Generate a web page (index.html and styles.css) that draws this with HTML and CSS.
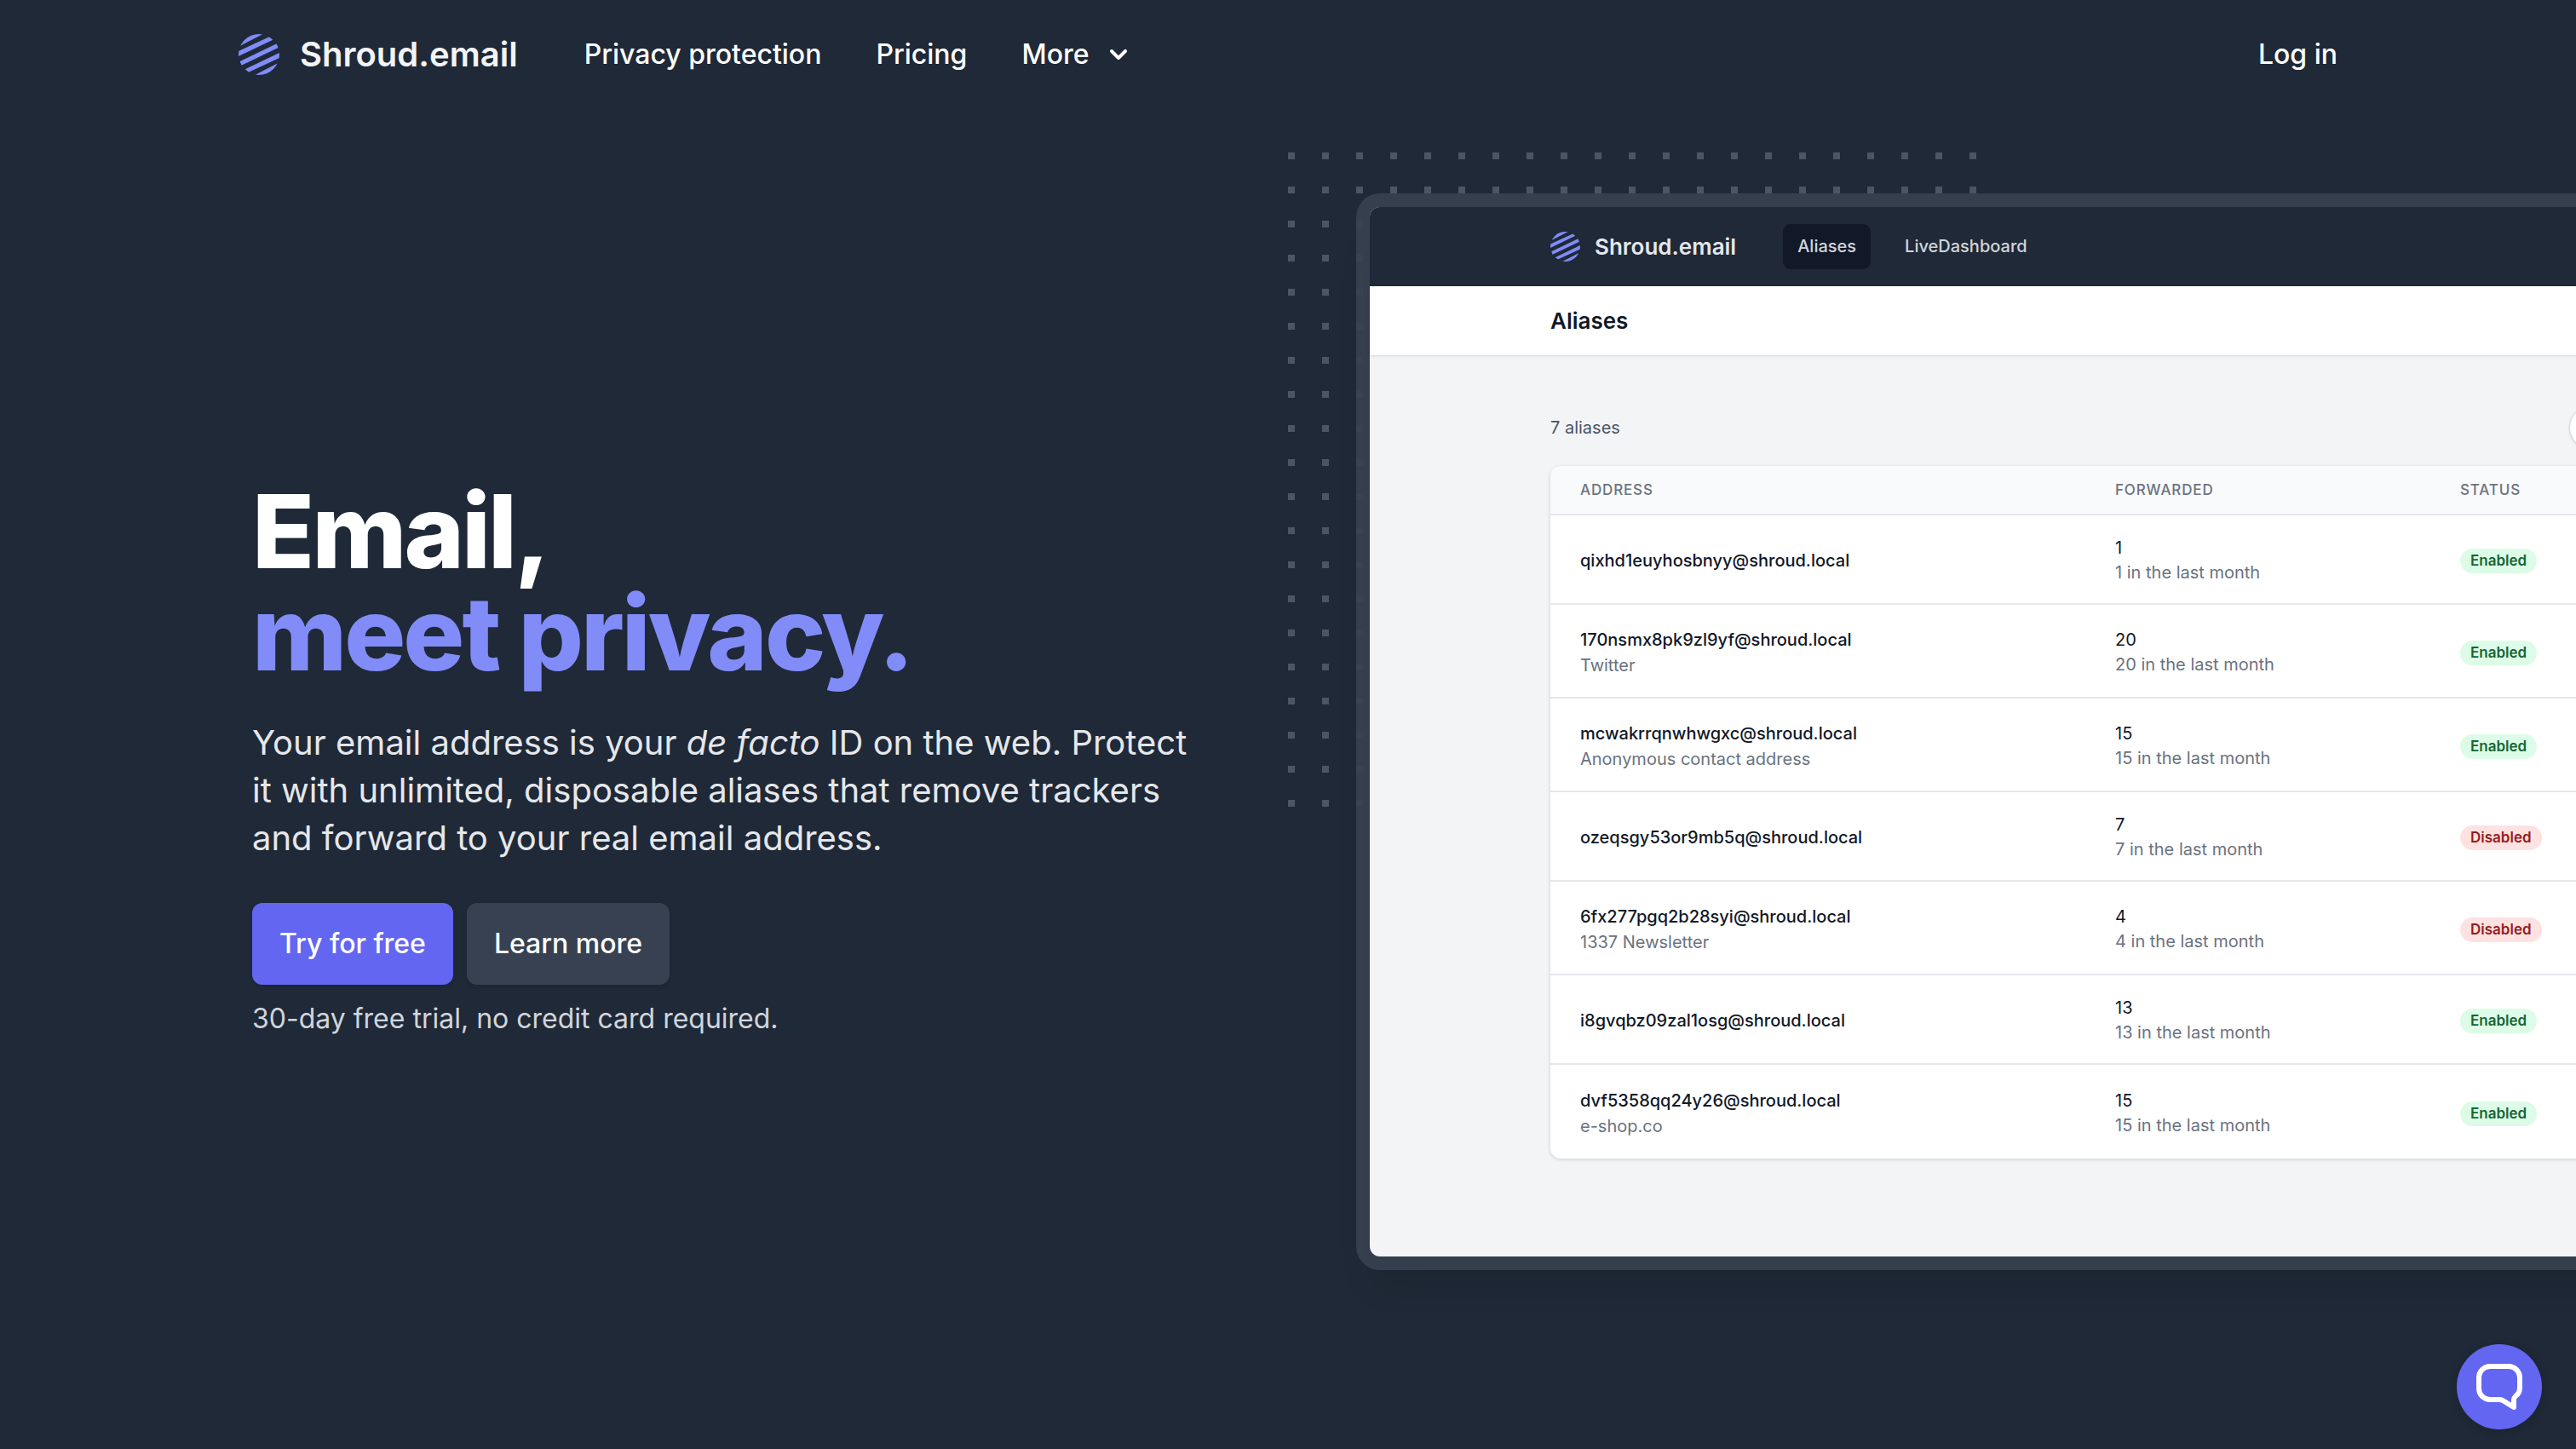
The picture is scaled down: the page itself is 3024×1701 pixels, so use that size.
FILE: index.html
```html
<!DOCTYPE html>
<html lang="en">
<head>
<meta charset="utf-8">
<meta name="viewport" content="width=device-width, initial-scale=1">
<title>Shroud.email</title>
<link rel="stylesheet" href="styles.css">
</head>
<body>
<svg class="defs" aria-hidden="true">
  <symbol id="mark" viewBox="0 0 144 144">
    <clipPath id="disc"><circle cx="72" cy="72" r="72"/></clipPath>
    <g clip-path="url(#disc)" fill="currentColor">
      <path d="M6 41 90 -2H0Z"/>
      <path d="M-2 61 108 10 121 20 -2 79Z"/>
      <path d="M5 96 136 33 140 48 9 111Z"/>
      <path d="M146 83 36 134 23 124 146 65Z"/>
      <path d="M138 103 54 146H144Z"/>
    </g>
  </symbol>
</svg>

<header class="site-header">
  <a class="brand" href="#">
    <svg class="brand-mark" aria-hidden="true"><use href="#mark"/></svg>
    <span>Shroud.email</span>
  </a>
  <nav class="site-nav">
    <a href="#">Privacy protection</a>
    <a href="#">Pricing</a>
    <button type="button" class="more">More
      <svg class="chevron" viewBox="0 0 20 20" fill="currentColor" aria-hidden="true"><path fill-rule="evenodd" clip-rule="evenodd" d="M5.293 7.293a1 1 0 011.414 0L10 10.586l3.293-3.293a1 1 0 111.414 1.414l-4 4a1 1 0 01-1.414 0l-4-4a1 1 0 010-1.414z"/></svg>
    </button>
  </nav>
  <a class="login" href="#">Log in</a>
</header>

<main class="stage">
  <div class="hero">
    <section class="pitch">
      <h1><span class="line">Email,</span> <span class="line accent">meet privacy.</span></h1>
      <p class="lead">Your email address is your <em>de facto</em> ID on the web. Protect it with unlimited, disposable aliases that remove trackers and forward to your real email address.</p>
      <div class="actions">
        <a class="btn btn-primary" href="#">Try for free</a>
        <a class="btn btn-muted" href="#">Learn more</a>
      </div>
      <p class="note">30-day free trial, no credit card required.</p>
    </section>

    <section class="preview">
      <svg class="dots" width="808" height="784" aria-hidden="true">
        <defs><pattern id="dot" width="40" height="40" patternUnits="userSpaceOnUse"><rect width="8" height="8" fill="#4b5563"/></pattern></defs>
        <rect width="808" height="784" fill="url(#dot)"/>
      </svg>
      <div class="app">
        <div class="app-bar">
          <a class="app-brand" href="#">
            <svg class="app-mark" aria-hidden="true"><use href="#mark"/></svg>
            <span>Shroud.email</span>
          </a>
          <a class="tab tab-active" href="#">Aliases</a>
          <a class="tab" href="#">LiveDashboard</a>
        </div>
        <h2 class="app-title">Aliases</h2>
        <div class="app-body">
          <div class="toolbar">
            <span>7 aliases</span>
            <input class="search" type="search" aria-label="Search aliases">
          </div>
          <table class="aliases">
            <colgroup><col class="c-address"><col class="c-forwarded"><col></colgroup>
            <thead><tr><th>Address</th><th>Forwarded</th><th>Status</th></tr></thead>
            <tbody>
              <tr><td><strong>qixhd1euyhosbnyy@shroud.local</strong></td><td><b>1</b><small>1 in the last month</small></td><td><span class="badge on">Enabled</span></td></tr>
              <tr class="named"><td><strong>170nsmx8pk9zl9yf@shroud.local</strong><small>Twitter</small></td><td><b>20</b><small>20 in the last month</small></td><td><span class="badge on">Enabled</span></td></tr>
              <tr class="named"><td><strong>mcwakrrqnwhwgxc@shroud.local</strong><small>Anonymous contact address</small></td><td><b>15</b><small>15 in the last month</small></td><td><span class="badge on">Enabled</span></td></tr>
              <tr><td><strong>ozeqsgy53or9mb5q@shroud.local</strong></td><td><b>7</b><small>7 in the last month</small></td><td><span class="badge off">Disabled</span></td></tr>
              <tr class="named"><td><strong>6fx277pgq2b28syi@shroud.local</strong><small>1337 Newsletter</small></td><td><b>4</b><small>4 in the last month</small></td><td><span class="badge off">Disabled</span></td></tr>
              <tr><td><strong>i8gvqbz09zal1osg@shroud.local</strong></td><td><b>13</b><small>13 in the last month</small></td><td><span class="badge on">Enabled</span></td></tr>
              <tr class="named"><td><strong>dvf5358qq24y26@shroud.local</strong><small>e-shop.co</small></td><td><b>15</b><small>15 in the last month</small></td><td><span class="badge on">Enabled</span></td></tr>
            </tbody>
          </table>
        </div>
      </div>
    </section>
  </div>
</main>

<button class="chat" type="button" aria-label="Open chat">
  <svg viewBox="0 0 54 54" fill="none" stroke="#fff" stroke-width="6" stroke-linejoin="round" aria-hidden="true"><path d="M16 3h22a13 13 0 0 1 13 13v12c0 5-2 8-5 10q-2 2-2 4v9L31 43q-2-1-4-1H16A13 13 0 0 1 3 29V16A13 13 0 0 1 16 3Z"/></svg>
</button>
</body>
</html>
```
FILE: styles.css
```css
*, *::before, *::after { box-sizing: border-box; }

body {
  margin: 0;
  min-height: 100vh;
  background: #1f2937;
  color: #fff;
  font-family: Inter, "Liberation Sans", sans-serif;
  font-size: 32px;
  line-height: 48px;
}

a { color: inherit; text-decoration: none; }
h1, h2, p { margin: 0; }
button { font: inherit; color: inherit; border: 0; padding: 0; background: none; cursor: pointer; }
svg { display: block; }
.defs { position: absolute; width: 0; height: 0; }

/* Header */
.site-header {
  display: flex;
  align-items: center;
  max-width: 2560px;
  margin: 0 auto;
  padding: 40px 48px 0;
  font-weight: 500;
}
.brand {
  display: flex;
  align-items: center;
  gap: 24px;
  margin-right: 78px;
  color: #f3f4f6;
  font-size: 40px;
  font-weight: 600;
}
.brand-mark { width: 48px; height: 48px; color: #818cf8; }
.site-nav { display: flex; gap: 64px; }
.more { display: flex; align-items: center; gap: 14px; }
.chevron { width: 40px; height: 40px; }
.login { margin-left: auto; }

/* Hero */
.stage { overflow: hidden; }
.hero {
  display: grid;
  grid-template-columns: 1fr 1fr;
  align-items: center;
  max-width: 2560px;
  margin: 0 auto;
  padding: 155px 64px 64px;
}
.pitch { padding: 66px 96px 0 0; }
h1 {
  font-size: 120px;
  font-weight: 800;
  line-height: 120px;
  letter-spacing: -0.025em;
}
.line { display: block; }
.accent { color: #818cf8; }
.lead { margin-top: 40px; font-size: 40px; line-height: 56px; color: #e5e7eb; }
.actions { display: flex; gap: 16px; margin-top: 48px; }
.btn {
  padding: 24px 32px;
  border-radius: 12px;
  font-weight: 500;
  box-shadow: 0 2px 4px rgba(0, 0, 0, 0.1);
}
.btn-primary { background: #6366f1; }
.btn-muted { background: #374151; }
.note { margin-top: 16px; color: #d1d5db; }

/* Product preview */
.preview { position: relative; min-width: 0; padding-left: 96px; }
.dots { position: absolute; top: -64px; left: 0; }
.app {
  position: relative;
  width: 174%;
  border-radius: 12px;
  background: #f3f4f6;
  box-shadow: 0 0 0 16px rgba(55, 65, 81, 0.9), 0 40px 50px -10px rgba(0, 0, 0, 0.1), 0 20px 20px -10px rgba(0, 0, 0, 0.04);
  color: #111827;
  font-size: 20px;
  line-height: 29px;
}
.app-bar {
  display: flex;
  align-items: center;
  height: 93px;
  padding: 0 212px;
  border-radius: 12px 0 0;
  background: #1f2937;
  color: #d1d5db;
  font-weight: 500;
}
.app-brand {
  display: flex;
  align-items: center;
  gap: 17px;
  margin-right: 55px;
  color: #e5e7eb;
  font-size: 26px;
  font-weight: 600;
}
.app-mark { width: 35px; height: 35px; color: #818cf8; }
.tab { margin-right: 23px; padding: 12px 17px; border-radius: 9px; }
.tab-active { background: #111827; }
.app-title {
  padding: 26px 212px;
  background: #fff;
  box-shadow: 0 1px 3px rgba(0, 0, 0, 0.12);
  font-size: 26px;
  font-weight: 600;
}
.app-body { padding: 59px 212px 115px; }
.toolbar {
  display: flex;
  align-items: center;
  justify-content: space-between;
  margin-bottom: 19px;
  color: #4b5563;
}
.search {
  width: 329px;
  height: 52px;
  border: 1px solid #d1d5db;
  border-radius: 26px;
  background: #fff;
  box-shadow: 0 1px 3px rgba(0, 0, 0, 0.1);
}
.aliases {
  width: 100%;
  table-layout: fixed;
  border-collapse: separate;
  border-spacing: 0;
  border-radius: 12px;
  overflow: hidden;
  background: #fff;
  box-shadow: 0 1px 4px rgba(0, 0, 0, 0.16);
}
.c-address { width: 628px; }
.c-forwarded { width: 405px; }
th {
  height: 58px;
  padding: 0 35px;
  background: #f9fafb;
  border-bottom: 2px solid #e5e7eb;
  color: #6b7280;
  font-size: 17px;
  font-weight: 500;
  letter-spacing: 0.05em;
  text-align: left;
  text-transform: uppercase;
}
td { height: 105px; padding: 3px 35px 0; border-bottom: 2px solid #e5e7eb; }
.named td { height: 110px; }
tr:last-child td { border-bottom: 0; }
td strong, td b, td small { display: block; font-size: 20px; }
td strong { font-weight: 500; }
td b { font-weight: 400; }
td small { color: #6b7280; }
.named strong { line-height: 32px; }
.badge {
  display: inline-block;
  padding: 0 12px;
  border-radius: 15px;
  font-size: 17px;
  font-weight: 600;
}
.on { background: #dcfce7; color: #166534; }
.off { background: #fee2e2; color: #991b1b; }

/* Chat launcher */
.chat {
  position: fixed;
  right: 40px;
  bottom: 23px;
  display: grid;
  place-items: center;
  width: 100px;
  height: 100px;
  border-radius: 50%;
  background: #6366f1;
  box-shadow: 0 2px 12px rgba(0, 0, 0, 0.15);
}
.chat svg { width: 54px; height: 54px; }
```
